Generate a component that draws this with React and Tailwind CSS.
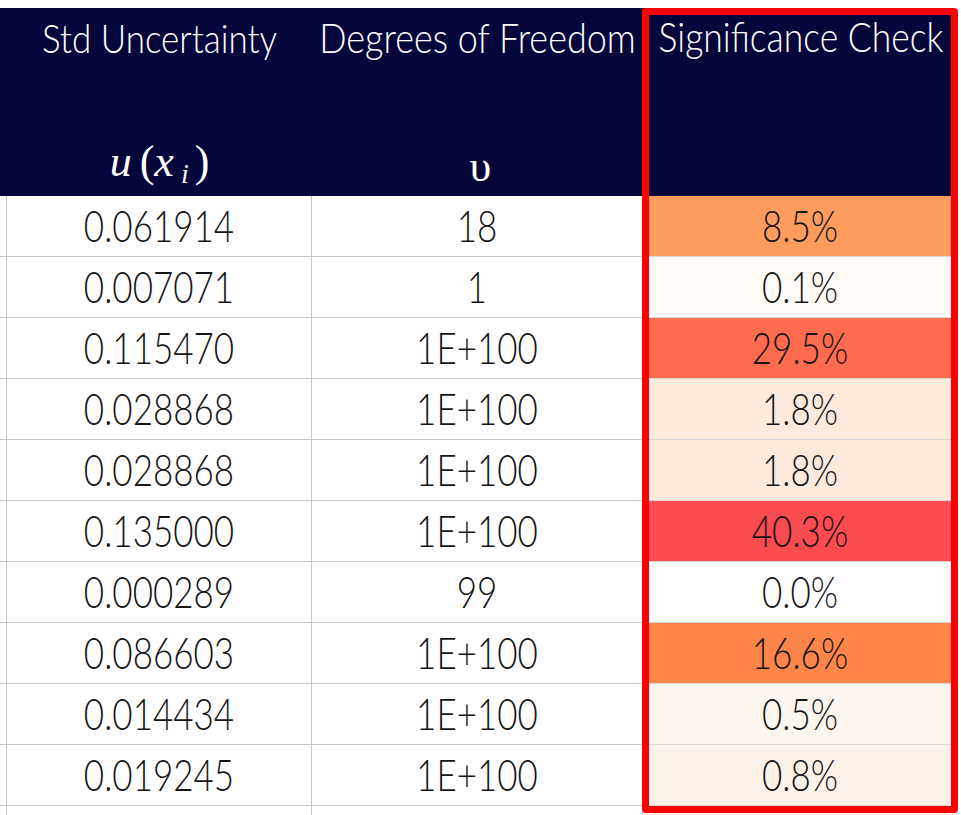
import React from "react";

const rows = [
  ["0.061914", "18", "8.5%", "bg-[#fd9c5e]"],
  ["0.007071", "1", "0.1%", "bg-[#fffbf7]"],
  ["0.115470", "1E+100", "29.5%", "bg-[#fe6b4e]"],
  ["0.028868", "1E+100", "1.8%", "bg-[#feeadd]"],
  ["0.028868", "1E+100", "1.8%", "bg-[#feeadd]"],
  ["0.135000", "1E+100", "40.3%", "bg-[#fa4b50]"],
  ["0.000289", "99", "0.0%", "bg-[#ffffff]"],
  ["0.086603", "1E+100", "16.6%", "bg-[#fd8549]"],
  ["0.014434", "1E+100", "0.5%", "bg-[#fdf5ef]"],
  ["0.019245", "1E+100", "0.8%", "bg-[#fdf2ea]"],
];

const sans = { fontFamily: 'Lato, "Open Sans", "Liberation Sans", sans-serif' };
const serif = { fontFamily: '"Liberation Serif", "DejaVu Serif", serif' };

export default function App() {
  return (
    <div className="relative w-[961px] h-[815px] overflow-hidden bg-white pt-2" style={sans}>
      <div className="w-[951px]">
        {/* header */}
        <div className="grid grid-cols-[7px_305px_331px_308px] h-[188px] bg-[#06063b] text-white font-light">
          <div />
          <div className="flex flex-col items-center justify-between pt-[6px] pb-[4px]">
            <div className="text-[35px] leading-[46px] scale-y-115">Std Uncertainty</div>
            <div className="text-[44px] leading-[50px] text-white" style={serif}>
              <i>u</i>
              <span className="ml-[8px]">(</span>
              <i>x</i>
              <i className="text-[28px] ml-[7px] relative top-[7px]">i</i>
              <span className="ml-[6px]">)</span>
            </div>
          </div>
          <div className="flex flex-col items-center justify-between pt-[6px] pb-[4px]">
            <div className="text-[36px] leading-[46px] scale-y-115 whitespace-nowrap">Degrees of Freedom</div>
            <div className="text-[44px] leading-[50px] pl-[6px]" style={serif}>υ</div>
          </div>
          <div className="flex flex-col items-center pt-[6px] pl-[8px]">
            <div className="text-[35.5px] leading-[46px] scale-y-115 whitespace-nowrap">Significance Check</div>
          </div>
        </div>

        {/* body */}
        {rows.map(([u, v, s, bg], i) => (
          <div key={i} className="grid grid-cols-[7px_305px_331px_308px] h-[61px] text-[35px] font-light text-[#151515]">
            <div className="border-r border-b border-[#c8c8c8]" />
            <div className="flex items-center justify-center border-r border-b border-[#c8c8c8] pb-[1px]">
              <span className="scale-y-125">{u}</span>
            </div>
            <div className="flex items-center justify-center border-r border-b border-[#c8c8c8] pb-[1px]">
              <span className="scale-y-125">{v}</span>
            </div>
            <div className={`flex items-center justify-center border-b border-[#d6d6d6] pb-[1px] pl-[6px] ${bg}`}>
              <span className="scale-y-125">{s}</span>
            </div>
          </div>
        ))}
        <div className="grid grid-cols-[7px_305px_331px_308px] h-[61px]">
          <div className="border-r border-[#c8c8c8]" />
          <div className="border-r border-[#c8c8c8]" />
          <div className="border-r border-[#c8c8c8]" />
          <div />
        </div>
      </div>

      {/* highlight frame */}
      <div className="absolute left-[642px] top-[8px] w-[316px] h-[805px] border-[7px] border-[#ff0000] rounded-[4px] pointer-events-none" />
    </div>
  );
}
